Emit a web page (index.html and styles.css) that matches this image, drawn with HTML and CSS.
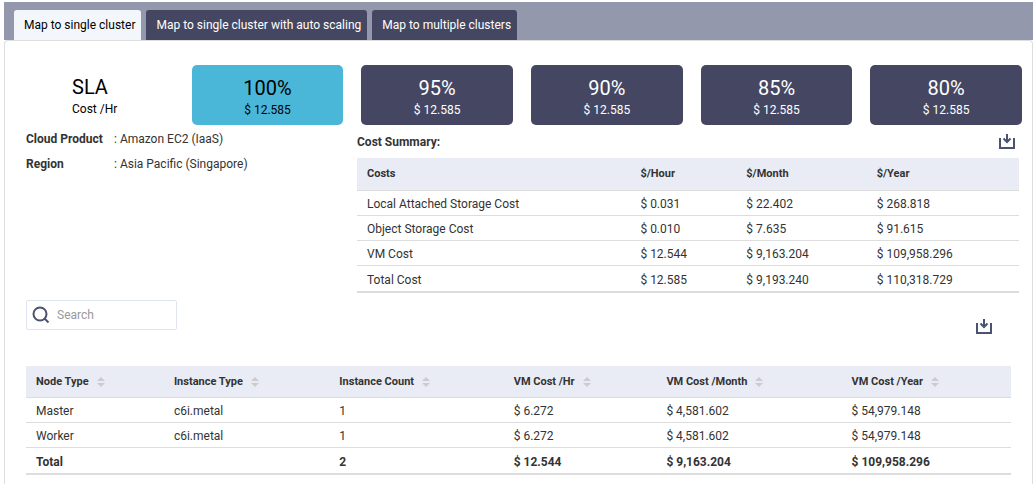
FILE: index.html
```html
<!DOCTYPE html>
<html lang="en">
<head>
<meta charset="utf-8">
<title>Cluster cost mapping</title>
<link rel="stylesheet" href="styles.css">
</head>
<body>
<svg class="sprite" aria-hidden="true">
  <symbol id="icon-download" viewBox="0 0 16 16"><path d="M1 4v10h14V4" fill="none" stroke="currentColor" stroke-width="2"/><path d="M8 0v7M4.500 4.500L8 8l3.500-3.500" fill="none" stroke="currentColor" stroke-width="2"/></symbol>
  <symbol id="icon-search" viewBox="0 0 18 18"><circle cx="8" cy="8" r="6.500" fill="none" stroke="currentColor" stroke-width="2"/><path d="M12.500 12.500L16.500 16.500" stroke="currentColor" stroke-width="2"/></symbol>
  <symbol id="icon-sort" viewBox="0 0 8 10"><path d="M4 0l4 4H0zM4 10L0 6h8z" fill="currentColor"/></symbol>
</svg>
<main class="page">
  <nav class="tabs" role="tablist" aria-label="Cluster mapping">
    <button class="tab tab-active" role="tab" aria-selected="true">Map to single cluster</button>
    <button class="tab" role="tab" aria-selected="false">Map to single cluster with auto scaling</button>
    <button class="tab" role="tab" aria-selected="false">Map to multiple clusters</button>
  </nav>
  <section class="panel">
    <div class="sla-row">
      <div class="sla-label"><span class="sla-level">SLA</span><span class="sla-cost">Cost /Hr</span></div>
      <button class="sla sla-active"><span class="sla-level">100%</span><span class="sla-cost">$ 12.585</span></button>
      <button class="sla"><span class="sla-level">95%</span><span class="sla-cost">$ 12.585</span></button>
      <button class="sla"><span class="sla-level">90%</span><span class="sla-cost">$ 12.585</span></button>
      <button class="sla"><span class="sla-level">85%</span><span class="sla-cost">$ 12.585</span></button>
      <button class="sla"><span class="sla-level">80%</span><span class="sla-cost">$ 12.585</span></button>
    </div>
    <div class="overview">
      <dl class="details">
        <dt>Cloud Product</dt><dd>: Amazon EC2 (IaaS)</dd>
        <dt>Region</dt><dd>: Asia Pacific (Singapore)</dd>
      </dl>
      <section class="summary">
        <div class="summary-head">
          <h2 class="summary-title">Cost Summary:</h2>
          <button class="download" aria-label="Download cost summary"><svg class="icon-download"><use href="#icon-download"/></svg></button>
        </div>
        <table class="grid cost-grid">
          <thead><tr><th class="c-name">Costs</th><th class="c-hour">$/Hour</th><th class="c-month">$/Month</th><th class="c-year">$/Year</th></tr></thead>
          <tbody>
            <tr><td>Local Attached Storage Cost</td><td>$ 0.031</td><td>$ 22.402</td><td>$ 268.818</td></tr>
            <tr><td>Object Storage Cost</td><td>$ 0.010</td><td>$ 7.635</td><td>$ 91.615</td></tr>
            <tr><td>VM Cost</td><td>$ 12.544</td><td>$ 9,163.204</td><td>$ 109,958.296</td></tr>
            <tr><td>Total Cost</td><td>$ 12.585</td><td>$ 9,193.240</td><td>$ 110,318.729</td></tr>
          </tbody>
        </table>
      </section>
    </div>
    <div class="toolbar">
      <label class="search"><svg class="icon-search" aria-hidden="true"><use href="#icon-search"/></svg><input class="search-input" type="search" placeholder="Search" aria-label="Search"></label>
      <button class="download" aria-label="Download node table"><svg class="icon-download"><use href="#icon-download"/></svg></button>
    </div>
    <div class="nodes">
      <table class="grid node-grid">
        <thead><tr>
          <th class="n-type"><button class="sort">Node Type<svg class="icon-sort"><use href="#icon-sort"/></svg></button></th>
          <th class="n-instance"><button class="sort">Instance Type<svg class="icon-sort"><use href="#icon-sort"/></svg></button></th>
          <th class="n-count"><button class="sort">Instance Count<svg class="icon-sort"><use href="#icon-sort"/></svg></button></th>
          <th class="n-hour"><button class="sort">VM Cost /Hr<svg class="icon-sort"><use href="#icon-sort"/></svg></button></th>
          <th class="n-month"><button class="sort">VM Cost /Month<svg class="icon-sort"><use href="#icon-sort"/></svg></button></th>
          <th class="n-year"><button class="sort">VM Cost /Year<svg class="icon-sort"><use href="#icon-sort"/></svg></button></th>
        </tr></thead>
        <tbody>
          <tr><td>Master</td><td>c6i.metal</td><td>1</td><td>$ 6.272</td><td>$ 4,581.602</td><td>$ 54,979.148</td></tr>
          <tr><td>Worker</td><td>c6i.metal</td><td>1</td><td>$ 6.272</td><td>$ 4,581.602</td><td>$ 54,979.148</td></tr>
          <tr class="total"><td>Total</td><td></td><td>2</td><td>$ 12.544</td><td>$ 9,163.204</td><td>$ 109,958.296</td></tr>
        </tbody>
      </table>
    </div>
  </section>
</main>
</body>
</html>
```

FILE: styles.css
```css
* { box-sizing: border-box; }
body { margin: 0; background: #fff; color: #333; font: 12px/16px Roboto, sans-serif; }
button { border: 0; padding: 0; background: none; color: inherit; font: inherit; cursor: pointer; }
.sprite { display: none; }
.page { display: flex; flex-direction: column; min-height: 100vh; padding: 2px 2px 0 4px; }
.tabs { display: flex; gap: 5px; padding: 8px 10px 0; background: #9498ac; }
.tab { height: 30px; padding: 0 6px 0 10px; border-radius: 3px 3px 0 0; background: #454762; color: #fff; white-space: nowrap; }
.tab-active { background: #f3f7fb; color: #000; }
.panel { flex: 1; padding: 24px 10px 10px 17px; border: 1px solid #ddd; border-bottom: 0; border-radius: 4px 4px 0 0; }
.sla-row { display: grid; grid-template-columns: repeat(6, 1fr); gap: 18px; }
.sla, .sla-label { display: flex; flex-direction: column; justify-content: center; height: 60px; }
.sla { align-items: center; padding-top: 2px; border-radius: 5px; background: #454762; color: #fff; }
.sla-active { background: #4ab7d9; color: #000; }
.sla-label { padding-left: 50px; color: #000; }
.sla-level { font-size: 20px; line-height: 28px; }
.overview { display: grid; grid-template-columns: 1fr 2fr; padding: 0 3px 0 4px; }
.details { display: grid; grid-template-columns: 88px 1fr; align-content: start; row-gap: 9px; margin: 0; padding-top: 6px; }
.details dt { font-weight: 700; }
.details dd { margin: 0; }
.summary-head { display: flex; align-items: center; justify-content: space-between; height: 33px; padding-right: 4px; }
.summary-title { margin: 0; font-size: 12px; font-weight: 700; }
.download { display: flex; color: #4a536f; }
.icon-download { width: 16px; height: 16px; }
.grid { width: 100%; border-collapse: separate; border-spacing: 0; table-layout: fixed; border-bottom: 1px solid #ddd; }
.grid th, .grid td { padding: 0 0 0 10px; border-bottom: 1px solid #ddd; text-align: left; white-space: nowrap; }
.grid th { height: 32px; background: #e9ecf4; font-size: 11px; font-weight: 700; }
.grid td { height: 25px; padding-top: 2px; }
.grid tr:last-child td { height: 26px; }
.grid tr:last-child th, .cost-grid th { height: 32px; }
.cost-grid tr:last-child th { height: 33px; }
.c-name { width: 41.3%; }
.c-hour { width: 16%; }
.c-month { width: 19.7%; }
.c-year { width: 23%; }
.toolbar { display: flex; justify-content: space-between; align-items: flex-start; padding: 7px 30px 36px 4px; }
.toolbar { padding-bottom: 31px; }
.toolbar .download { padding-top: 19px; }
.search { display: flex; align-items: center; gap: 7px; width: 151px; height: 30px; padding: 0 5px; border: 1px solid #dfe4f0; border-radius: 2px; color: #4a536f; }
.search-input { flex: 1; min-width: 0; border: 0; padding: 0; outline: 0; background: none; color: #333; font: inherit; }
.search-input::placeholder { color: #999; }
.icon-search { width: 18px; height: 18px; }
.nodes { padding: 0 11px 0 4px; }
.n-type { width: 14%; }
.n-instance { width: 16.8%; }
.n-count { width: 17.7%; }
.n-hour { width: 15.5%; }
.n-month { width: 18.8%; }
.n-year { width: 17.2%; }
.sort { display: flex; align-items: center; gap: 8px; }
.icon-sort { width: 8px; height: 10px; color: #ccc; }
.total { font-weight: 700; }
```
